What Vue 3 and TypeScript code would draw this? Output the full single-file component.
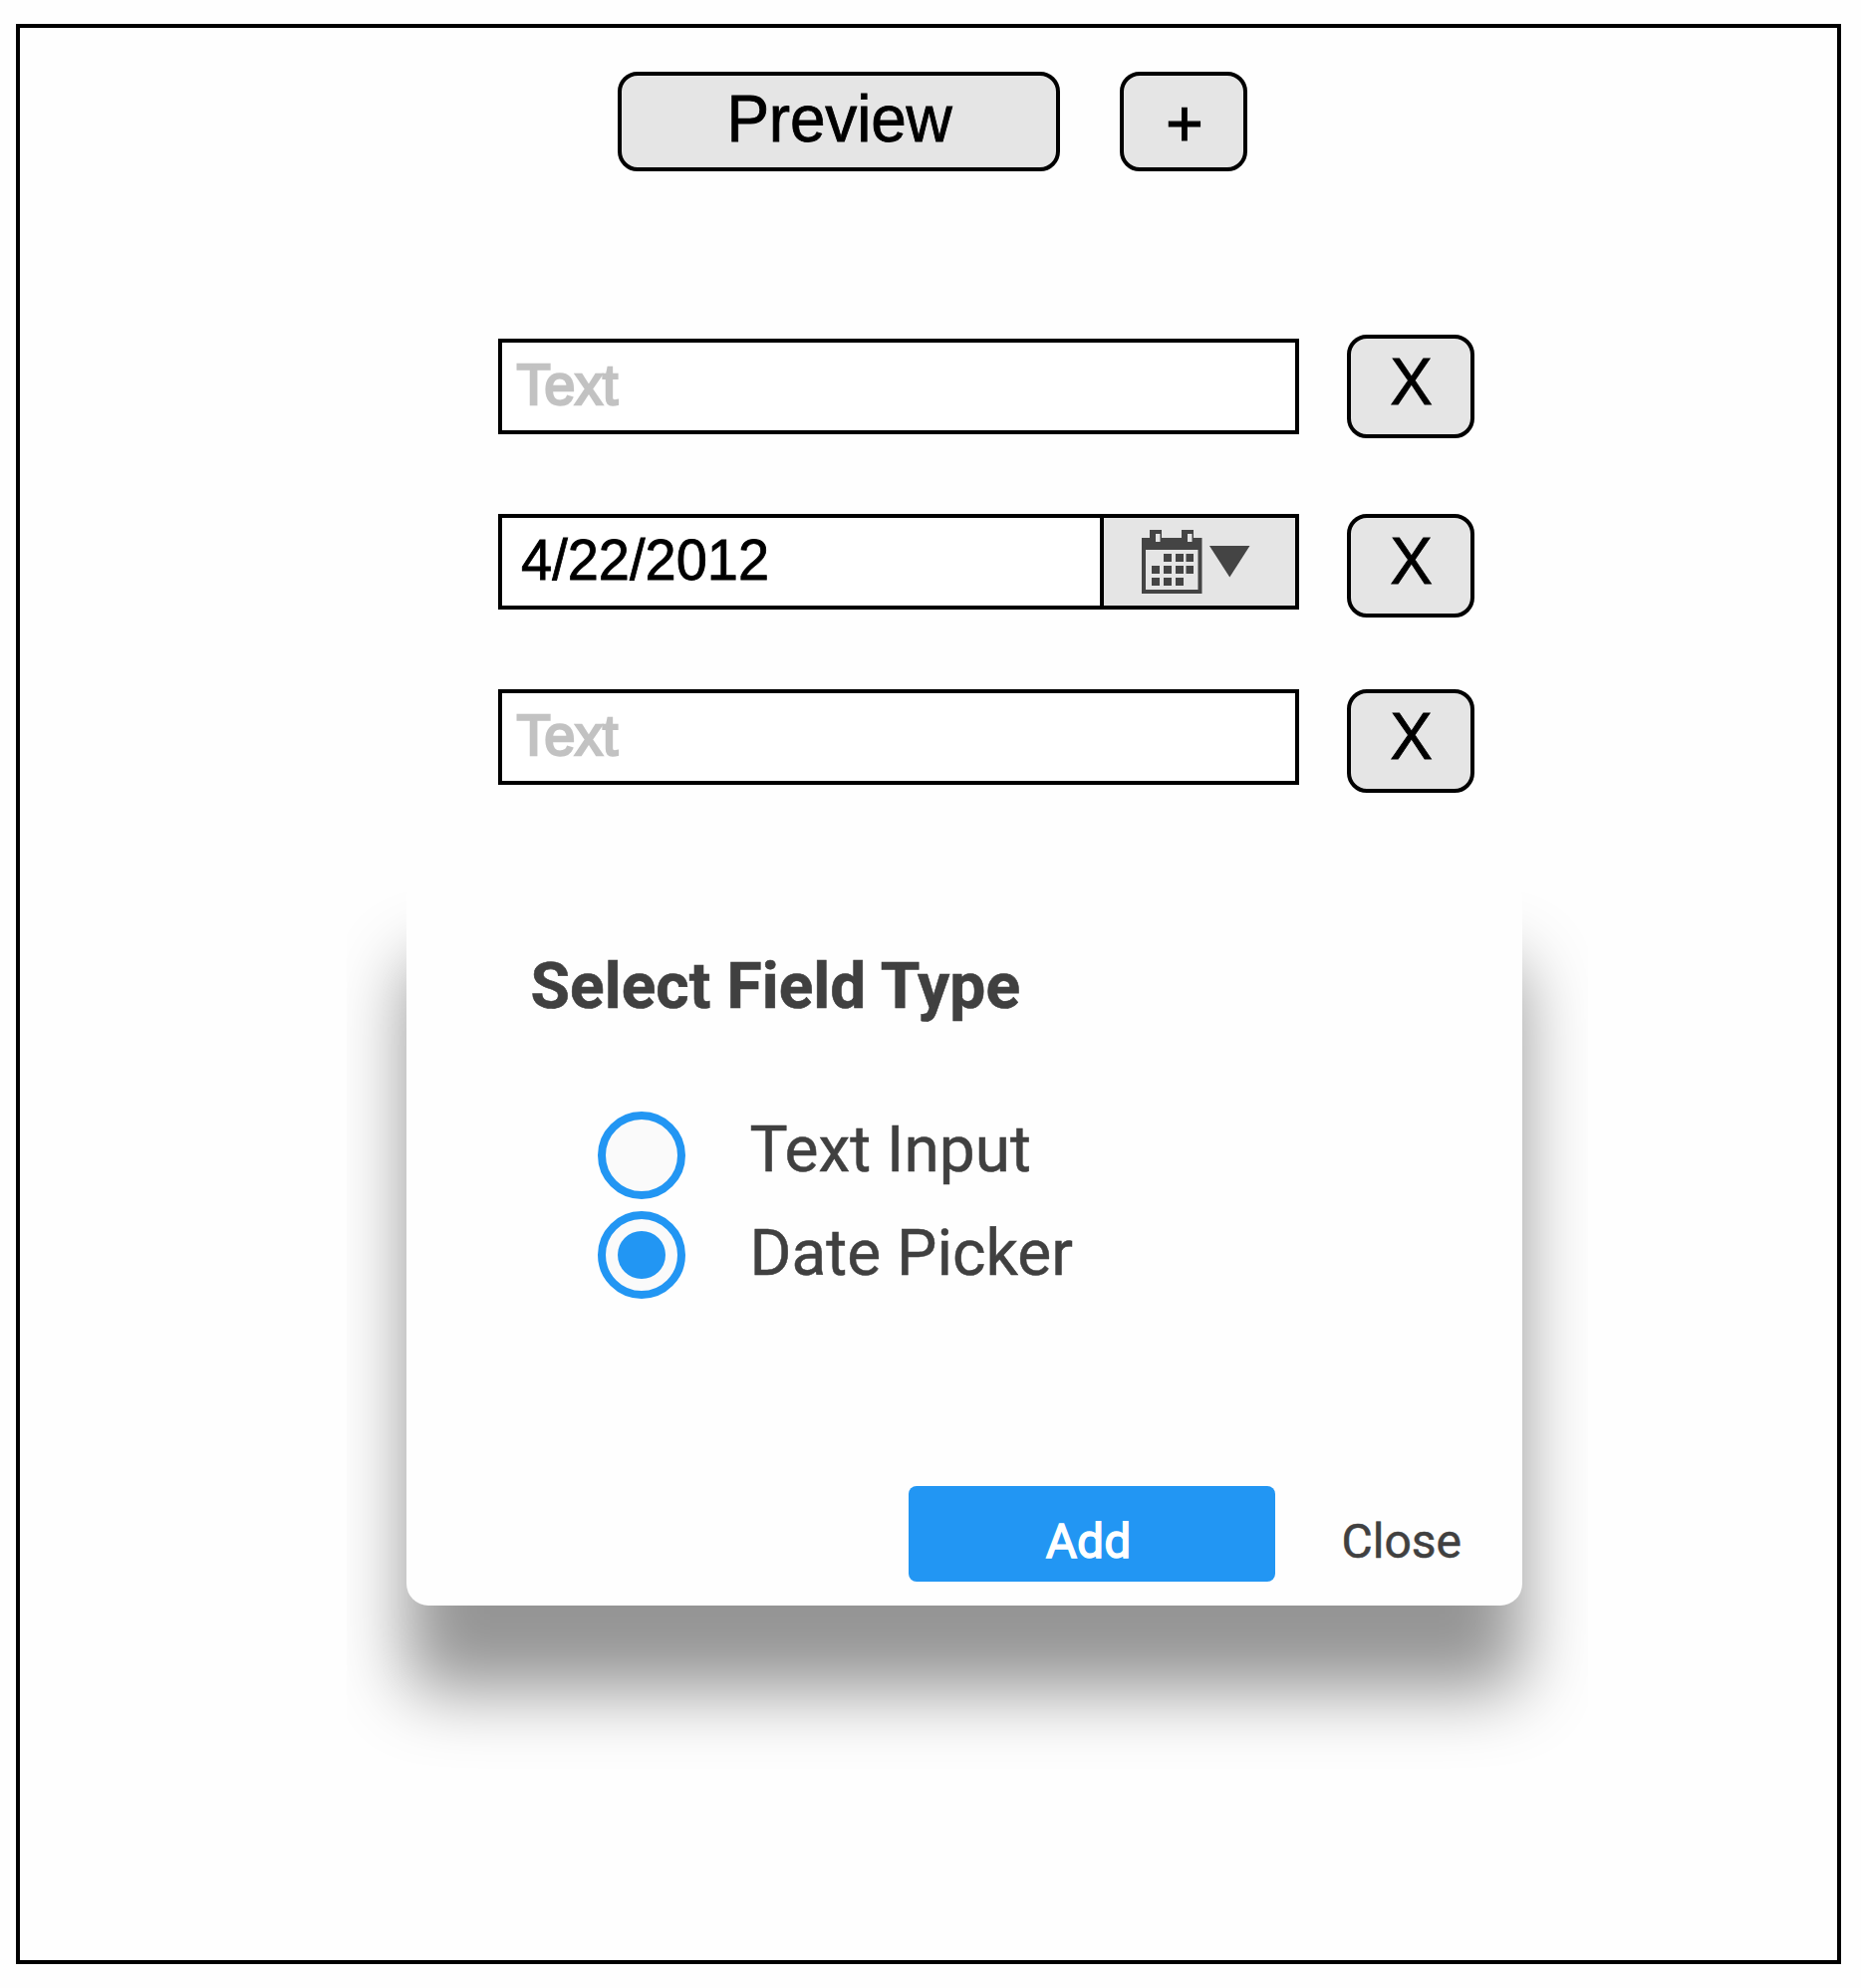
<script setup lang="ts">
import { ref } from 'vue'

type FieldKind = 'text' | 'date'

interface Field {
  id: number
  kind: FieldKind
  value: string
}

const fields = ref<Field[]>([
  { id: 1, kind: 'text', value: 'Text' },
  { id: 2, kind: 'date', value: '4/22/2012' },
  { id: 3, kind: 'text', value: 'Text' },
])

const options: { kind: FieldKind; label: string }[] = [
  { kind: 'text', label: 'Text Input' },
  { kind: 'date', label: 'Date Picker' },
]

const selected = ref<FieldKind>('date')

// Day squares of the calendar glyph, as [x, y, width]
const days: [number, number, number][] = [
  [22, 24, 8], [34, 24, 8], [44.5, 24, 7.5],
  [10, 36, 8], [22, 36, 8], [34, 36, 8], [44.5, 36, 7.5],
  [10, 48, 8], [22, 48, 8], [34, 48, 8],
]
</script>

<template>
  <main class="frame">
    <header class="toolbar">
      <button class="btn preview" type="button"><span class="btn-text">Preview</span></button>
      <button class="btn plus" type="button"><span class="btn-text">+</span></button>
    </header>

    <section class="fields">
      <div v-for="field in fields" :key="field.id" class="row" :class="field.kind">
        <div class="field">
          <span class="value">{{ field.value }}</span>
          <span v-if="field.kind === 'date'" class="picker">
            <svg width="110" height="64" viewBox="0 0 110 64" fill="#444">
              <path fill-rule="evenodd" d="M0 8H8V0H20V8H40V0H52V8H60.5V64H0ZM14 4V12H18.5V4ZM46 4V12H50.5V4ZM4 20V60H56.5V20Z" />
              <rect v-for="(d, i) in days" :key="i" :x="d[0]" :y="d[1]" :width="d[2]" height="8" />
              <path d="M68 16H108.5L88.3 47.5Z" />
            </svg>
          </span>
        </div>
        <button class="btn remove" type="button"><span class="btn-text">X</span></button>
      </div>
    </section>

    <section class="modal">
      <h2 class="title">Select Field Type</h2>
      <div class="options">
        <div v-for="o in options" :key="o.kind" class="option" :class="o.kind" @click="selected = o.kind">
          <span class="radio"><span v-if="selected === o.kind" class="dot"></span></span>
          <span class="label">{{ o.label }}</span>
        </div>
      </div>
      <footer class="actions">
        <button class="add" type="button">Add</button>
        <button class="close" type="button">Close</button>
      </footer>
    </section>
  </main>
</template>

<style>
body {
  margin: 0;
  background: #fefefe;
}
</style>

<style scoped>
* {
  box-sizing: border-box;
}
button {
  margin: 0;
  padding: 0;
  border: 0;
  background: none;
  font: inherit;
}
.frame {
  width: 1832px;
  height: 1948px;
  margin: 24px 0 0 16px;
  border: 4px solid #000;
  font-family: "Liberation Sans", Arial, sans-serif;
  color: #000;
}
.toolbar {
  display: flex;
  gap: 60px;
  margin: 44px 0 0 600px;
}
.btn {
  display: flex;
  justify-content: center;
  align-items: flex-start;
  width: 128px;
  height: 104px;
  border: 4px solid #000;
  border-radius: 20px;
  background: #e5e5e5;
  font-size: 64px;
}
.btn-text {
  line-height: 88px;
  transform: scaleY(1.04);
  transform-origin: 50% 66px;
  -webkit-text-stroke: 0.8px #000;
}
.preview {
  width: 444px;
  height: 100px;
}
.preview .btn-text {
  padding-left: 1px;
  letter-spacing: -0.2px;
}
.plus {
  height: 100px;
}
.plus .btn-text {
  padding-left: 2px;
  line-height: 98px;
  -webkit-text-stroke-width: 1.2px;
}
.fields {
  display: flex;
  flex-direction: column;
  gap: 72px;
  margin: 164px 0 0 480px;
}
.row {
  display: flex;
  align-items: flex-start;
  justify-content: space-between;
  width: 980px;
}
.row.text .field {
  margin-top: 4px;
}
.row.date {
  margin-top: 4px;
}
.row:last-child .field {
  margin-top: 0;
}
.remove .btn-text {
  padding-left: 1px;
}
.field {
  display: flex;
  justify-content: space-between;
  width: 804px;
  height: 96px;
  border: 4px solid #000;
  background: #fff;
  font-size: 56px;
}
.value {
  padding-left: 19px;
  line-height: 85px;
  transform: scaleY(1.03);
  transform-origin: 0 62px;
  -webkit-text-stroke: 0.8px #000;
}
.text .value {
  padding-left: 14.5px;
  color: #c2c2c2;
  letter-spacing: -0.3px;
  -webkit-text-stroke: 2.4px #c2c2c2;
}
.picker {
  width: 196px;
  height: 88px;
  padding: 12px 0 0 38px;
  border-left: 4px solid #000;
  background: #e5e5e5;
}
.picker svg {
  display: block;
}
.modal {
  display: flex;
  flex-direction: column;
  width: 1120px;
  height: 732px;
  margin: 84px 0 0 388px;
  padding: 73px 61px 24px 124px;
  border-radius: 22px;
  background: #fefefe;
  box-shadow: 0 86px 70px rgba(0, 0, 0, 0.417);
  clip-path: inset(0 -66px -220px -60px);
  font-family: Roboto, sans-serif;
  color: #404040;
}
.title {
  margin: 0;
  padding-left: 0.5px;
  font-size: 64px;
  font-weight: 700;
  line-height: 76px;
  letter-spacing: 0.08px;
  -webkit-text-stroke: 0.6px #404040;
}
.options {
  display: flex;
  flex-direction: column;
  gap: 12px;
  margin: 87px 0 0 68px;
}
.option {
  display: flex;
  gap: 64.5px;
  height: 88px;
  font-size: 64px;
}
.radio {
  display: flex;
  align-items: center;
  justify-content: center;
  width: 88px;
  height: 88px;
  border: 8px solid #2296f3;
  border-radius: 50%;
  background: #fafafa;
}
.dot {
  width: 48px;
  height: 48px;
  border-radius: 50%;
  background: #2296f3;
}
.label {
  line-height: 78px;
  -webkit-text-stroke: 0.5px #404040;
}
.option.date .label {
  line-height: 86px;
}
.actions {
  display: flex;
  justify-content: flex-end;
  gap: 66px;
  margin-top: auto;
  font-size: 48px;
}
.actions button {
  height: 96px;
  padding-top: 15px;
  line-height: 81px;
}
.actions .add {
  width: 368px;
  padding-right: 8px;
  border-radius: 8px;
  background: #2296f3;
  color: #fff;
  -webkit-text-stroke: 1.4px #fff;
}
.actions .close {
  color: #404040;
  -webkit-text-stroke: 0.5px #404040;
}
</style>
